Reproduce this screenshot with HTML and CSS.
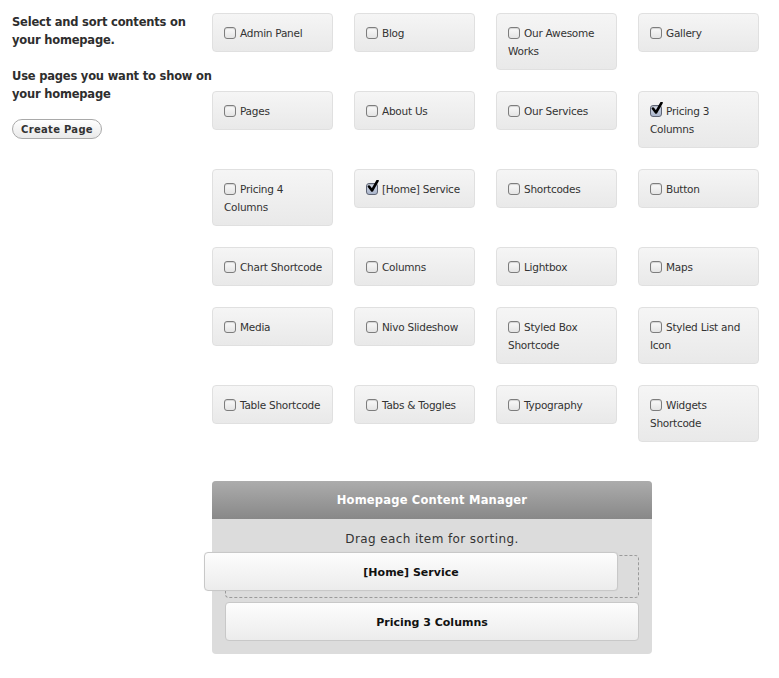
FILE: index.html
```html
<!DOCTYPE html>
<html>
<head>
<meta charset="utf-8">
<link rel="stylesheet" href="styles.css">
</head>
<body>
<div class="page">
  <div class="side">
    <p class="intro">Select and sort contents on your homepage.</p>
    <p class="intro">Use pages you want to show on your homepage</p>
    <button class="create-btn">Create Page</button>
  </div>
  <div class="main">
    <div class="grid">
      <label class="item"><span class="cb"></span>Admin Panel</label>
      <label class="item"><span class="cb"></span>Blog</label>
      <label class="item"><span class="cb"></span>Our Awesome Works</label>
      <label class="item"><span class="cb"></span>Gallery</label>
      <label class="item"><span class="cb"></span>Pages</label>
      <label class="item"><span class="cb"></span>About Us</label>
      <label class="item"><span class="cb"></span>Our Services</label>
      <label class="item"><span class="cb checked"><svg viewBox="0 0 14 14" width="14" height="14"><path d="M3 6.5 L6 10.5 L11.5 0.8" fill="none" stroke="#000" stroke-width="2.6" stroke-linecap="round" stroke-linejoin="round"/></svg></span>Pricing 3 Columns</label>
      <label class="item"><span class="cb"></span>Pricing 4 Columns</label>
      <label class="item"><span class="cb checked"><svg viewBox="0 0 14 14" width="14" height="14"><path d="M3 6.5 L6 10.5 L11.5 0.8" fill="none" stroke="#000" stroke-width="2.6" stroke-linecap="round" stroke-linejoin="round"/></svg></span>[Home] Service</label>
      <label class="item"><span class="cb"></span>Shortcodes</label>
      <label class="item"><span class="cb"></span>Button</label>
      <label class="item"><span class="cb"></span>Chart Shortcode</label>
      <label class="item"><span class="cb"></span>Columns</label>
      <label class="item"><span class="cb"></span>Lightbox</label>
      <label class="item"><span class="cb"></span>Maps</label>
      <label class="item"><span class="cb"></span>Media</label>
      <label class="item"><span class="cb"></span>Nivo Slideshow</label>
      <label class="item"><span class="cb"></span>Styled Box Shortcode</label>
      <label class="item"><span class="cb"></span>Styled List and Icon</label>
      <label class="item"><span class="cb"></span>Table Shortcode</label>
      <label class="item"><span class="cb"></span>Tabs &amp; Toggles</label>
      <label class="item"><span class="cb"></span>Typography</label>
      <label class="item"><span class="cb"></span>Widgets Shortcode</label>
    </div>

    <div class="manager">
      <div class="manager-head">Homepage Content Manager</div>
      <div class="manager-body">
        <div class="hint">Drag each item for sorting.</div>
        <div class="slot">
          <div class="placeholder"></div>
          <div class="sort-item dragging">[Home] Service</div>
        </div>
        <div class="sort-item">Pricing 3 Columns</div>
      </div>
    </div>
  </div>
</div>
</body>
</html>
```
FILE: styles.css
```css
html, body {
  margin: 0;
  padding: 0;
  background: #fff;
}
body {
  font-family: "DejaVu Sans", Verdana, sans-serif;
  color: #333;
}
.page {
  display: flex;
  align-items: flex-start;
  padding: 13px 0 0 12px;
}
.side {
  width: 200px;
  flex: none;
}
.intro {
  margin: 0 0 18px 0;
  font-weight: bold;
  font-size: 11.5px;
  letter-spacing: -0.2px;
  line-height: 18px;
  color: #2e2e2e;
}
.intro + .intro {
  margin-bottom: 16px;
}
.create-btn {
  display: block;
  height: 20px;
  width: 90px;
  padding: 0;
  border: 1px solid #a9a9a9;
  border-radius: 10px;
  background: linear-gradient(#ffffff, #e9e9e9);
  font-family: "DejaVu Sans", Verdana, sans-serif;
  font-weight: bold;
  font-size: 10px;
  color: #333;
  letter-spacing: 0.3px;
}
.main {
  flex: none;
  width: 548px;
}
.grid {
  display: grid;
  grid-template-columns: repeat(4, 121px);
  column-gap: 21px;
  row-gap: 21px;
  align-items: start;
}
.item {
  display: block;
  box-sizing: border-box;
  border: 1px solid #e0e0e0;
  border-radius: 4px;
  background: linear-gradient(#f5f5f5, #e9e9e9);
  padding: 10px 8px 9px 11px;
  font-size: 10.5px;
  letter-spacing: -0.25px;
  line-height: 18px;
  color: #333;
}
.cb {
  display: inline-block;
  position: relative;
  box-sizing: border-box;
  width: 12px;
  height: 12px;
  margin-right: 4px;
  vertical-align: -2px;
  border: 1px solid #7d7d7d;
  border-radius: 3px;
  background: linear-gradient(#fafafa, #e4e4e4);
  box-shadow: inset 0 1px 1px rgba(0,0,0,0.15);
}
.cb.checked {
  background: linear-gradient(#d5dbe8, #aab5cb);
  border-color: #5f6575;
}
.cb svg {
  position: absolute;
  left: -1px;
  top: -4px;
}
.manager {
  margin-top: 39px;
  width: 440px;
  border-radius: 4px;
  background: #dcdcdc;
}
.manager-head {
  height: 38px;
  line-height: 38px;
  text-align: center;
  color: #fff;
  font-weight: bold;
  font-size: 11.5px;
  letter-spacing: 0.2px;
  border-radius: 4px 4px 0 0;
  background: linear-gradient(#acacac, #888888);
}
.manager-body {
  padding: 11px 13px 13px 13px;
}
.hint {
  text-align: center;
  font-size: 12px;
  letter-spacing: 0.4px;
  line-height: 18px;
  color: #333;
  margin-bottom: 7px;
}
.slot {
  position: relative;
  height: 43px;
  margin-bottom: 4px;
}
.placeholder {
  box-sizing: border-box;
  height: 43px;
  border: 1px dashed #9a9a9a;
  border-radius: 4px;
}
.sort-item {
  box-sizing: border-box;
  height: 39px;
  line-height: 39px;
  text-align: center;
  font-weight: bold;
  font-size: 11px;
  color: #111;
  border: 1px solid #c8c8c8;
  border-radius: 4px;
  background: linear-gradient(#fdfdfd, #ececec);
}
.sort-item.dragging {
  position: absolute;
  left: -21px;
  top: -3px;
  width: 414px;
  box-shadow: 0 0 1px rgba(0,0,0,0.1);
}
```
